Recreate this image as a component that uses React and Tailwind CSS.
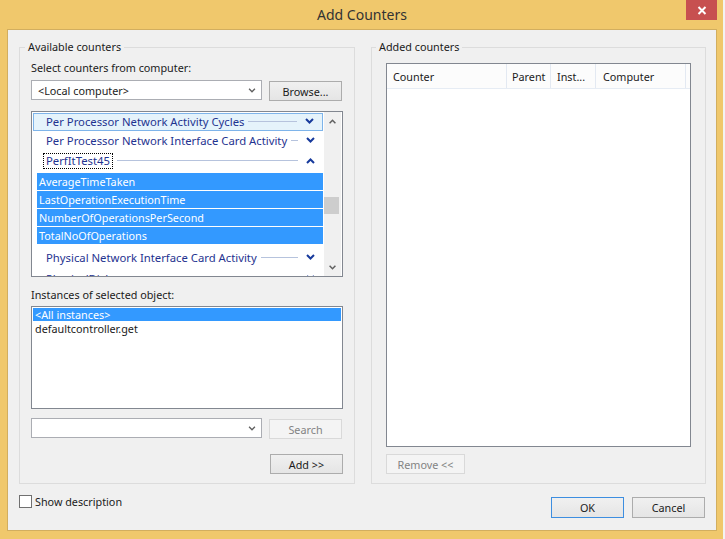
import React from 'react'

function Chevron({ up = false, className = '', w = 9, h = 6, sw = 2 }) {
  return (
    <svg width={w} height={h} viewBox="0 0 9 6" className={className}>
      <polyline
        points={up ? '1,5 4.5,1.5 8,5' : '1,1 4.5,4.5 8,1'}
        fill="none"
        stroke="currentColor"
        strokeWidth={sw}
      />
    </svg>
  )
}

function CategoryRow({ label, up, focused, hot, className = '' }) {
  return (
    <div
      className={`flex shrink-0 items-center pb-[2px] text-[11.3px] text-[#1f3390] ${
        hot ? 'mx-[1px] border border-[#7eb4ea] bg-[#e5f3fb] pl-[12px]' : 'mx-[1px] pl-[13px]'
      } ${className}`}
    >
      {focused ? (
        <span className="-ml-[3px] border border-dotted border-black px-[2px] leading-[14px]">{label}</span>
      ) : (
        <span className="whitespace-nowrap">{label}</span>
      )}
      <div className="ml-[4px] h-px flex-1 bg-[#b6c3dd]" />
      <div className="flex w-[25px] justify-center text-[#173a9c]">
        <Chevron up={up} />
      </div>
    </div>
  )
}

function Button({ children, disabled, primary, className = '' }) {
  const look = disabled
    ? 'border-[#d9d9d9] bg-[#f4f4f4] text-[#838383]'
    : primary
    ? 'border-[#3d8ee0] bg-linear-to-b from-[#f0f0f0] to-[#e5e5e5]'
    : 'border-[#acacac] bg-linear-to-b from-[#f0f0f0] to-[#e5e5e5]'
  return (
    <div className={`flex h-[20px] w-[73px] items-center justify-center border ${look} ${className}`}>
      {children}
    </div>
  )
}

function Combo({ text }) {
  return (
    <div className="flex h-[20px] w-[231px] items-center border border-[#abadb3] bg-white pl-[6px] pr-[5px]">
      <span className="flex-1">{text}</span>
      <Chevron w={8} h={5} sw={1.6} className="text-[#606060]" />
    </div>
  )
}

const selected = [
  'AverageTimeTaken',
  'LastOperationExecutionTime',
  'NumberOfOperationsPerSecond',
  'TotalNoOfOperations',
]

const columns = [
  { label: 'Counter', w: 'w-[120px] pl-[6px]' },
  { label: 'Parent', w: 'w-[44px] pl-[5px]' },
  { label: 'Inst...', w: 'w-[45px] pl-[6px]' },
  { label: 'Computer', w: 'w-[90px] pl-[7px]' },
]

export default function App() {
  return (
    <div className="flex h-[539px] w-[725px] bg-[#f3f3f3] font-['Noto_Sans',sans-serif] text-[10.8px] leading-[15px] text-[#1b1b1b]">
      <div className="flex w-[723px] flex-col bg-[#f0c86c] pb-[8px] pl-[7px] pr-[6px]">
        {/* title bar */}
        <div className="flex h-[29px] items-start">
          <div className="w-[31px]" />
          <div className="flex-1 text-center text-[14px] leading-[30px] text-[#333]">Add Counters</div>
          <div className="flex h-[20px] w-[31px] items-center justify-center bg-[#c75050]">
            <svg width="10" height="9" viewBox="0 0 10 9">
              <path d="M1.5 1 L8.5 8 M8.5 1 L1.5 8" stroke="white" strokeWidth="2" />
            </svg>
          </div>
        </div>

        {/* client area */}
        <div className="flex flex-1 flex-col border border-[#d2ae5f] bg-[#f0f0f0] pl-[11px] pr-[10px] pt-[10px]">
          <div className="flex gap-[16px]">
            {/* available counters */}
            <fieldset className="w-[336px] border border-[#dcdcdc] p-0">
              <legend className="ml-[5px] px-[3px] leading-[14px]">Available counters</legend>
              <div className="flex flex-col px-[11px] pb-[9px] pt-[6px]">
                <div>Select counters from computer:</div>
                <div className="mt-[5px] flex items-start">
                  <Combo text="<Local computer>" />
                  <Button className="ml-[7px] mt-[1px]">Browse...</Button>
                </div>

                <div className="mt-[10px] flex h-[166px] border border-[#828790] bg-white">
                  <div className="flex w-[292px] flex-col overflow-hidden">
                    <CategoryRow hot label="Per Processor Network Activity Cycles" className="mt-[1px] h-[18px]" />
                    <CategoryRow label="Per Processor Network Interface Card Activity" className="h-[20px]" />
                    <CategoryRow up focused label="PerfItTest45" className="h-[21px]" />
                    {selected.map((s) => (
                      <div
                        key={s}
                        className="ml-[5px] mr-[1px] mt-[1px] flex h-[17px] shrink-0 items-center bg-[#3399ff] pl-[2px] text-white"
                      >
                        {s}
                      </div>
                    ))}
                    <CategoryRow label="Physical Network Interface Card Activity" className="mt-[4px] h-[20px]" />
                    <CategoryRow label="PhysicalDisk" className="mt-[1px] h-[20px]" />
                  </div>
                  <div className="flex w-[17px] flex-col bg-[#f0f0f0]">
                    <div className="flex h-[18px] items-center justify-center text-[#606060]">
                      <Chevron up w={9} h={5} sw={1.8} />
                    </div>
                    <div className="flex-1">
                      <div className="mt-[67px] h-[17px] w-[15px] bg-[#cdcdcd]" />
                    </div>
                    <div className="flex h-[18px] items-center justify-center text-[#606060]">
                      <Chevron w={9} h={5} sw={1.8} />
                    </div>
                  </div>
                </div>

                <div className="mt-[10px]">Instances of selected object:</div>
                <div className="mt-[4px] h-[103px] border border-[#828790] bg-white p-[1px] leading-[13px]">
                  <div className="h-[13px] bg-[#3399ff] pl-[2px] text-white">&lt;All instances&gt;</div>
                  <div className="mt-[1px] h-[13px] pl-[2px]">defaultcontroller.get</div>
                </div>

                <div className="mt-[9px] flex items-start">
                  <Combo text="" />
                  <Button disabled className="ml-[7px] mt-[1px]">Search</Button>
                </div>
                <div className="mt-[15px] flex justify-end">
                  <Button>Add &gt;&gt;</Button>
                </div>
              </div>
            </fieldset>

            {/* added counters */}
            <fieldset className="w-[335px] border border-[#dcdcdc] p-0">
              <legend className="ml-[4px] px-[3px] leading-[14px]">Added counters</legend>
              <div className="flex flex-col px-[14px] pb-[9px] pt-[9px]">
                <div className="h-[384px] border border-[#828790] bg-white">
                  <div className="flex h-[25px] border-b border-[#e6ecf4] bg-[#fcfcfc]">
                    {columns.map((c) => (
                      <div key={c.label} className={`flex items-center border-r border-[#e3e9f2] ${c.w}`}>
                        {c.label}
                      </div>
                    ))}
                  </div>
                </div>
                <Button disabled className="mt-[7px] w-[79px]">Remove &lt;&lt;</Button>
              </div>
            </fieldset>
          </div>

          {/* footer */}
          <div className="mt-[10px] flex items-start">
            <div className="flex items-center">
              <div className="h-[13px] w-[13px] border border-[#707070] bg-white" />
              <span className="ml-[3px]">Show description</span>
            </div>
            <div className="flex-1" />
            <div className="mr-[1px] mt-[3px] flex gap-[8px]">
              <Button primary className="h-[21px]">OK</Button>
              <Button className="h-[21px]">Cancel</Button>
            </div>
          </div>
        </div>
      </div>
    </div>
  )
}
